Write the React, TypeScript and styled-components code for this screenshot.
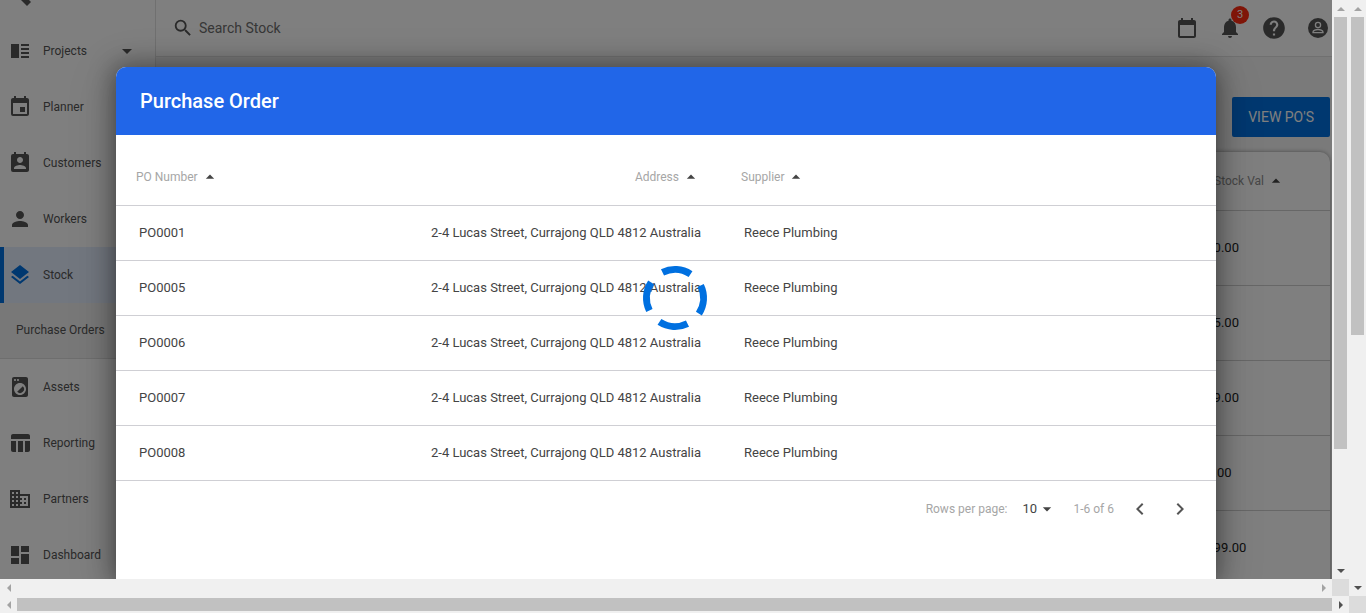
import React from "react";
import styled, { createGlobalStyle } from "styled-components";
import {
  MdEvent,
  MdPermContactCalendar,
  MdPerson,
  MdLayers,
  MdLocalLaundryService,
  MdTableChart,
  MdDashboard,
  MdSearch,
  MdNotifications,
  MdHelp,
  MdArrowDropDown,
  MdArrowDropUp,
  MdChevronLeft,
  MdChevronRight,
} from "react-icons/md";

const GlobalStyle = createGlobalStyle`
  *, *::before, *::after { box-sizing: border-box; }
  html, body { margin: 0; height: 100%; }
  #root { height: 100%; }
  body { font-family: Roboto, Arial, sans-serif; font-size: 13px; color: #222; overflow: hidden; }
  button, input, select { font: inherit; color: inherit; }
`;

/* ---------- scroll frames ---------- */

const Frame = styled.div`
  height: 100%;
  min-height: 0;
  min-width: 0;
  display: grid;
  grid-template-columns: minmax(0, 1fr) 17px;
  grid-template-rows: minmax(0, 1fr) 17px;
`;

const Viewport = styled.div`
  position: relative;
  min-width: 0;
  min-height: 0;
  overflow: hidden;
`;

const Track = styled.div<{ $vertical?: boolean }>`
  display: flex;
  flex-direction: ${(p) => (p.$vertical ? "column" : "row")};
  background: #f0f0f0;
`;

const Arrow = styled.span<{ $dim?: boolean }>`
  flex: 0 0 17px;
  display: flex;
  align-items: center;
  justify-content: center;
  color: ${(p) => (p.$dim ? "#a3a3a3" : "#505050")};
`;

const Rail = styled.div<{ $vertical?: boolean }>`
  flex: 1;
  display: flex;
  flex-direction: ${(p) => (p.$vertical ? "column" : "row")};
  padding: ${(p) => (p.$vertical ? "0 2px" : "2px 0")};
`;

const Thumb = styled.div<{ $size: string }>`
  flex: 0 0 ${(p) => p.$size};
  background: #c1c1c1;
`;

const Corner = styled.div`
  background: #dcdcdc;
`;

const arrowShapes = {
  up: "M0 6h8L4 2z",
  down: "M0 2h8L4 6z",
  left: "M6 0v8L2 4z",
  right: "M2 0v8l4-4z",
};

function ScrollArrow({ dir, dim }: { dir: keyof typeof arrowShapes; dim?: boolean }) {
  return (
    <Arrow $dim={dim}>
      <svg width="8" height="8" viewBox="0 0 8 8" fill="currentColor" aria-hidden="true">
        <path d={arrowShapes[dir]} />
      </svg>
    </Arrow>
  );
}

type ScrollFrameProps = {
  vertical: string;
  horizontal?: string;
  children: React.ReactNode;
};

function ScrollFrame({ vertical, horizontal, children }: ScrollFrameProps) {
  return (
    <Frame>
      <Viewport>{children}</Viewport>
      <Track $vertical>
        <ScrollArrow dir="up" dim />
        <Rail $vertical>
          <Thumb $size={vertical} />
        </Rail>
        <ScrollArrow dir="down" />
      </Track>
      <Track>
        <ScrollArrow dir="left" dim />
        <Rail>{horizontal && <Thumb $size={horizontal} />}</Rail>
        <ScrollArrow dir="right" dim={!horizontal} />
      </Track>
      <Corner />
    </Frame>
  );
}

/* ---------- application shell ---------- */

const Shell = styled.div`
  height: 100%;
  display: flex;
  background: #f4f4f4;
`;

const Sidebar = styled.nav`
  flex: 0 0 156px;
  display: flex;
  flex-direction: column;
  background: #fff;
  border-right: 1px solid #e0e0e0;
  overflow: hidden;
  font-size: 12px;
`;

const SidebarTop = styled.div`
  flex: 0 0 23px;
  padding-left: 20px;
  line-height: 0;
  color: #555;
`;

const NavItem = styled.a<{ $active?: boolean }>`
  flex: 0 0 56px;
  display: flex;
  align-items: center;
  padding: 0 16px 0 ${(p) => (p.$active ? 4 : 8)}px;
  border-left: ${(p) => (p.$active ? "4px solid #0070e0" : "0")};
  background: ${(p) => (p.$active ? "#e4eeff" : "transparent")};
  color: #555;
  text-decoration: none;
  svg:first-child { flex: none; color: ${(p) => (p.$active ? "#0070e0" : "#555")}; }
`;

const NavLabel = styled.span`
  flex: 1;
  padding: 0 0 1px 11px;
`;

const SubItem = styled.a`
  flex: 0 0 56px;
  display: flex;
  align-items: center;
  padding: 0 0 1px 16px;
  background: #f1f1f1;
  border-bottom: 1px solid #dcdcdc;
  color: #555;
  text-decoration: none;
`;

const Main = styled.main`
  flex: 1;
  min-width: 0;
  display: flex;
  flex-direction: column;
`;

const Topbar = styled.header`
  flex: 0 0 57px;
  display: flex;
  align-items: center;
  justify-content: space-between;
  padding: 0 2px 0 16px;
  background: #fff;
  border-bottom: 1px solid #e0e0e0;
  color: #555;
`;

const SearchBox = styled.label`
  display: flex;
  align-items: center;
  gap: 5px;
  input {
    width: 300px;
    border: 0;
    padding: 0;
    background: transparent;
    font-size: 14px;
    outline: none;
  }
  input::placeholder { color: #6e6e6e; opacity: 1; }
`;

const Actions = styled.div`
  display: flex;
  align-items: center;
  gap: 19px;
`;

const IconButton = styled.button`
  position: relative;
  display: flex;
  padding: 0;
  border: 0;
  background: none;
  color: #555;
`;

const Badge = styled.span`
  position: absolute;
  top: -10px;
  right: -7px;
  width: 18px;
  height: 18px;
  border-radius: 50%;
  background: #ff2a10;
  color: #fff;
  font-size: 11px;
  line-height: 18px;
  text-align: center;
`;

const Content = styled.div`
  flex: 1;
  min-height: 0;
  padding: 40px 2px 0 24px;
  display: flex;
  flex-direction: column;
  gap: 15px;
`;

const PrimaryButton = styled.button`
  flex: none;
  align-self: flex-end;
  height: 40px;
  padding: 0 16px;
  border: 0;
  border-radius: 2px;
  background: #0070e0;
  color: #fff;
  font-size: 14px;
`;

const StockCard = styled.section`
  flex: 1;
  background: #fff;
  border-radius: 10px 10px 0 0;
  box-shadow: 0 0 4px rgba(0, 0, 0, 0.4);
`;

const StockTable = styled.table`
  width: 100%;
  border-collapse: collapse;
  th {
    height: 58px;
    padding: 0 44px 0 0;
    border-bottom: 1px solid #cfcfcf;
    color: #8e8e8e;
    font-size: 12px;
    font-weight: 400;
    text-align: right;
  }
  td {
    height: 75px;
    padding: 0;
    border-bottom: 1px solid #cfcfcf;
  }
`;

const Amount = styled.div`
  width: 131px;
  margin-left: auto;
`;

/* ---------- dialog ---------- */

const Overlay = styled.div`
  position: absolute;
  inset: 0;
  padding-top: 67px;
  display: flex;
  justify-content: center;
  background: rgba(0, 0, 0, 0.5);
  overflow: hidden;
`;

const Dialog = styled.section`
  width: 100%;
  max-width: 1100px;
  height: 100%;
  border-radius: 10px 10px 0 0;
  background: #fff;
  box-shadow: 0 11px 15px -7px rgba(0, 0, 0, 0.2), 0 9px 46px 8px rgba(0, 0, 0, 0.12),
    0 0 24px 3px rgba(0, 0, 0, 0.36);
`;

const DialogHeader = styled.header`
  height: 68px;
  display: flex;
  align-items: center;
  padding: 0 24px;
  border-radius: 10px 10px 0 0;
  background: #2166e8;
  color: #fff;
  h2 { margin: 0; font-size: 20px; font-weight: 500; }
`;

const OrderTable = styled.table`
  width: 100%;
  border-collapse: collapse;
  table-layout: fixed;
  color: #444;
  th, td { border-bottom: 1px solid #cfcfd4; padding: 0; }
  th {
    height: 70px;
    padding-top: 14px;
    color: #a6a6a6;
    font-size: 12px;
    font-weight: 400;
    text-align: left;
  }
  td { height: 55px; }
  th:nth-child(1) { width: 280px; padding-left: 20px; }
  th:nth-child(2) { width: 305px; text-align: right; }
  th:nth-child(3) { padding-left: 40px; }
  td:nth-child(1) { padding-left: 23px; }
  td:nth-child(2) { text-align: right; }
  td:nth-child(3) { padding-left: 43px; }
`;

const SortButton = styled.button`
  display: inline-flex;
  align-items: center;
  gap: 2px;
  padding: 0;
  border: 0;
  background: none;
  svg { color: #444; }
`;

const Pager = styled.footer`
  display: flex;
  align-items: center;
  justify-content: flex-end;
  height: 56px;
  padding-right: 24px;
  color: #a6a6a6;
  font-size: 12px;
`;

const PageSize = styled.label`
  display: flex;
  align-items: center;
  gap: 15px;
  margin-right: 16px;
`;

const SelectWrap = styled.span`
  display: flex;
  align-items: center;
  color: #444;
  font-size: 13px;
  select {
    appearance: none;
    width: 15px;
    padding: 0;
    border: 0;
    background: transparent;
    outline: none;
  }
`;

const PageButtons = styled.div`
  display: flex;
  gap: 16px;
  margin-left: 14px;
`;

const SpinnerLayer = styled.div`
  position: absolute;
  top: 265px;
  left: 0;
  right: 0;
  padding-left: 18px;
  display: flex;
  justify-content: center;
`;

/* ---------- icons drawn here ---------- */

function PenTip() {
  return (
    <svg width="14" height="6" viewBox="0 0 14 6" fill="currentColor" aria-hidden="true">
      <path d="M1 0h8l2 2-4 4z" />
    </svg>
  );
}

function ProjectsIcon() {
  return (
    <svg width="24" height="24" viewBox="0 0 24 24" fill="currentColor" aria-hidden="true">
      <path d="M3 5h8v14H3zM13 5h8v2h-8zM13 9h8v2h-8zM13 13h8v2h-8zM13 17h8v2h-8z" />
    </svg>
  );
}

function CalendarIcon() {
  return (
    <svg width="24" height="24" viewBox="0 0 24 24" fill="currentColor" aria-hidden="true">
      <path d="M19 20H5V9h14zM16 2v2H8V2H6v2H5c-1.1 0-2 .9-2 2v14c0 1.1.9 2 2 2h14c1.1 0 2-.9 2-2V6c0-1.1-.9-2-2-2h-1V2z" />
    </svg>
  );
}

function PartnersIcon() {
  return (
    <svg width="24" height="24" viewBox="0 0 24 24" fill="currentColor" aria-hidden="true">
      <path
        fillRule="evenodd"
        d="M2 3h10v4h10v14H2zM4 5v2h2V5zM8 5v2h2V5zM4 9v2h2V9zM8 9v2h2V9zM4 13v2h2v-2zM8 13v2h2v-2zM4 17v2h2v-2zM8 17v2h2v-2zM12 9v2h2v2h-2v2h2v2h-2v2h8V9zM16 11h2v2h-2zM16 15h2v2h-2z"
      />
    </svg>
  );
}

function AccountIcon() {
  return (
    <svg width="24" height="24" viewBox="0 0 24 24" aria-hidden="true">
      <circle cx="12" cy="12" r="10" fill="#555" />
      <circle cx="12" cy="9" r="2.6" fill="none" stroke="#fff" strokeWidth="1.3" />
      <path d="M7 16.7v-.6c0-1.6 3-2.6 5-2.6s5 1 5 2.6v.6z" fill="none" stroke="#fff" strokeWidth="1.3" />
    </svg>
  );
}

function Spinner() {
  return (
    <svg width="66" height="66" viewBox="0 0 66 66" role="img" aria-label="Loading">
      <circle
        cx="33"
        cy="33"
        r="28.5"
        fill="none"
        stroke="#0070e0"
        strokeWidth="7"
        pathLength="360"
        strokeDasharray="59 31"
        transform="rotate(-26 33 33)"
      />
    </svg>
  );
}

/* ---------- data ---------- */

const navTop = [
  { label: "Projects", icon: <ProjectsIcon />, expandable: true },
  { label: "Planner", icon: <MdEvent size={24} /> },
  { label: "Customers", icon: <MdPermContactCalendar size={24} /> },
  { label: "Workers", icon: <MdPerson size={24} /> },
  { label: "Stock", icon: <MdLayers size={24} />, active: true },
];

const navBottom = [
  { label: "Assets", icon: <MdLocalLaundryService size={24} /> },
  { label: "Reporting", icon: <MdTableChart size={24} /> },
  { label: "Partners", icon: <PartnersIcon /> },
  { label: "Dashboard", icon: <MdDashboard size={24} /> },
];

const stockValues = ["$90.00", "$85.00", "$49.00", "$5.00", "$199.00"];
const orders = ["PO0001", "PO0005", "PO0006", "PO0007", "PO0008"];

type NavEntry = { label: string; icon: React.ReactNode; expandable?: boolean; active?: boolean };

function NavGroup({ items }: { items: NavEntry[] }) {
  return (
    <>
      {items.map((item) => (
        <NavItem key={item.label} href="#" $active={item.active}>
          {item.icon}
          <NavLabel>{item.label}</NavLabel>
          {item.expandable && <MdArrowDropDown size={24} />}
        </NavItem>
      ))}
    </>
  );
}

function SortHeading({ children }: { children: React.ReactNode }) {
  return (
    <SortButton type="button">
      {children}
      <MdArrowDropUp size={20} />
    </SortButton>
  );
}

export default function App() {
  return (
    <>
      <GlobalStyle />
      <ScrollFrame vertical="318px" horizontal="100%">
        <ScrollFrame vertical="432px">
          <Shell>
            <Sidebar>
              <SidebarTop><PenTip /></SidebarTop>
              <NavGroup items={navTop} />
              <SubItem href="#">Purchase Orders</SubItem>
              <NavGroup items={navBottom} />
            </Sidebar>
            <Main>
              <Topbar>
                <SearchBox>
                  <MdSearch size={22} />
                  <input type="text" placeholder="Search Stock" aria-label="Search Stock" />
                </SearchBox>
                <Actions>
                  <IconButton type="button" aria-label="Calendar"><CalendarIcon /></IconButton>
                  <IconButton type="button" aria-label="Notifications">
                    <MdNotifications size={24} />
                    <Badge>3</Badge>
                  </IconButton>
                  <IconButton type="button" aria-label="Help"><MdHelp size={26} /></IconButton>
                  <IconButton type="button" aria-label="Account"><AccountIcon /></IconButton>
                </Actions>
              </Topbar>
              <Content>
                <PrimaryButton type="button">VIEW PO'S</PrimaryButton>
                <StockCard>
                  <StockTable>
                    <thead>
                      <tr><th><SortHeading>Stock Val</SortHeading></th></tr>
                    </thead>
                    <tbody>
                      {stockValues.map((value) => (
                        <tr key={value}><td><Amount>{value}</Amount></td></tr>
                      ))}
                    </tbody>
                  </StockTable>
                </StockCard>
              </Content>
            </Main>
          </Shell>
          <Overlay>
            <Dialog role="dialog" aria-labelledby="dialog-title">
              <DialogHeader><h2 id="dialog-title">Purchase Order</h2></DialogHeader>
              <OrderTable>
                <thead>
                  <tr>
                    <th><SortHeading>PO Number</SortHeading></th>
                    <th><SortHeading>Address</SortHeading></th>
                    <th><SortHeading>Supplier</SortHeading></th>
                  </tr>
                </thead>
                <tbody>
                  {orders.map((order) => (
                    <tr key={order}>
                      <td>{order}</td>
                      <td>2-4 Lucas Street, Currajong QLD 4812 Australia</td>
                      <td>Reece Plumbing</td>
                    </tr>
                  ))}
                </tbody>
              </OrderTable>
              <Pager>
                <PageSize>
                  Rows per page:
                  <SelectWrap>
                    <select defaultValue="10"><option>10</option></select>
                    <MdArrowDropDown size={20} />
                  </SelectWrap>
                </PageSize>
                <span>1-6 of 6</span>
                <PageButtons>
                  <IconButton type="button" aria-label="Previous page"><MdChevronLeft size={24} /></IconButton>
                  <IconButton type="button" aria-label="Next page"><MdChevronRight size={24} /></IconButton>
                </PageButtons>
              </Pager>
            </Dialog>
            <SpinnerLayer><Spinner /></SpinnerLayer>
          </Overlay>
        </ScrollFrame>
      </ScrollFrame>
    </>
  );
}
